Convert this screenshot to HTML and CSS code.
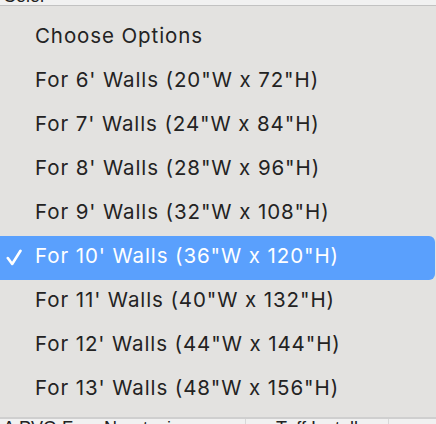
FILE: index.html
```html
<!DOCTYPE html>
<html>
<head>
<meta charset="utf-8">
<link rel="stylesheet" href="styles.css">
</head>
<body>
<div class="page">
  <div class="label-row"><span class="label">Color</span><span class="req">*</span></div>
  <div class="spacer"></div>
  <div class="bottom-row">
    <span class="cell">A PVC-Free Non-toxic</span>
    <span class="cell">Tuff Install</span>
    <span class="cell"></span>
  </div>

  <div class="menu">
    <div class="item">Choose Options</div>
    <div class="item">For 6' Walls (20"W x 72"H)</div>
    <div class="item">For 7' Walls (24"W x 84"H)</div>
    <div class="item">For 8' Walls (28"W x 96"H)</div>
    <div class="item">For 9' Walls (32"W x 108"H)</div>
    <div class="item selected">
      <svg class="check" width="17" height="18" viewBox="0 0 17 18"><path d="M1.8 9 L6.2 15 L14.5 1.8" fill="none" stroke="#fff" stroke-width="2.6" stroke-linecap="round" stroke-linejoin="round"/></svg>
      For 10' Walls (36"W x 120"H)
    </div>
    <div class="item">For 11' Walls (40"W x 132"H)</div>
    <div class="item">For 12' Walls (44"W x 144"H)</div>
    <div class="item">For 13' Walls (48"W x 156"H)</div>
  </div>
</div>
</body>
</html>
```

FILE: styles.css
```css
html, body {
  margin: 0;
  padding: 0;
}
body {
  width: 436px;
  height: 424px;
  overflow: hidden;
  background: #f1f1f1;
  font-family: Inter, "Liberation Sans", sans-serif;
}
.page {
  position: relative;
  width: 436px;
  height: 424px;
  overflow: hidden;
  display: flex;
  flex-direction: column;
}
.label-row {
  margin-top: -14px;
  padding-left: 3px;
  font-family: "Liberation Sans", Arial, sans-serif;
  font-size: 18px;
  line-height: 20px;
  color: #222;
  display: flex;
  gap: 40px;
}
.req {
  color: #c62828;
}
.spacer {
  flex: 1;
}
.bottom-row {
  height: 6px;
  box-sizing: border-box;
  flex: none;
  display: flex;
  font-family: "Liberation Sans", Arial, sans-serif;
  font-size: 18px;
  line-height: 18px;
  color: #222;
  border-top: 1px solid #cfcfcf;
}
.cell {
  padding-left: 3px;
  white-space: nowrap;
  height: 5px;
  overflow: hidden;
}
.cell:nth-child(1) {
  width: 242px;
  border-right: 1px solid #d8d8d8;
}
.cell:nth-child(2) {
  width: 112px;
  padding-left: 30px;
  border-right: 1px solid #d8d8d8;
}
.cell:nth-child(3) {
  flex: 1;
}
.menu {
  position: absolute;
  left: 0;
  top: 5px;
  width: 436px;
  height: 413px;
  box-sizing: border-box;
  background: #e3e2e0;
  border-top: 1px solid #c2c2c2;
  border-bottom: 1px solid #cfcfcf;
  padding: 10px 1px 0 0;
  display: flex;
  flex-direction: column;
}
.item {
  position: relative;
  height: 44px;
  box-sizing: border-box;
  padding: 0 0 5px 35px;
  display: flex;
  align-items: center;
  font-size: 20.5px;
  letter-spacing: 0.9px;
  color: #232323;
  white-space: nowrap;
}
.item.selected {
  background: #5aa0fd;
  color: #fff;
  border-radius: 0 6px 6px 0;
}
.check {
  position: absolute;
  left: 6px;
  top: 13px;
}
```
